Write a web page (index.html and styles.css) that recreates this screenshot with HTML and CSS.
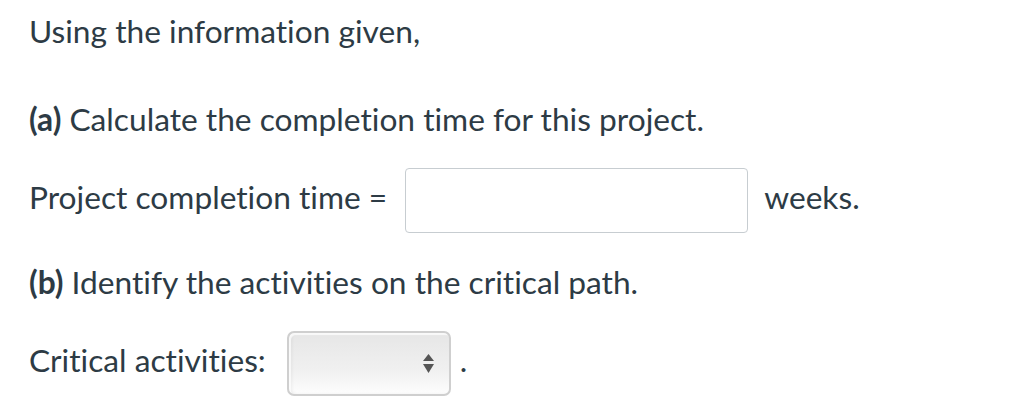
FILE: index.html
```html
<!DOCTYPE html>
<html>
<head>
<meta charset="utf-8">
<link rel="stylesheet" href="styles.css">
</head>
<body>
<div class="question">
  <p class="line intro">Using the information given,</p>
  <p class="line part part-a"><strong>(a)</strong> Calculate the completion time for this project.</p>
  <p class="line answer">Project completion time =<span class="field"></span>weeks.</p>
  <p class="line part part-b"><strong>(b)</strong> Identify the activities on the critical path.</p>
  <p class="line answer">Critical activities:<span class="select"><svg class="arrows" width="11" height="19" viewBox="0 0 11 19"><path d="M5.5 0 L11 7 L0 7 Z" fill="#555"/><path d="M0 10 L11 10 L5.5 19 Z" fill="#555"/></svg></span>.</p>
</div>
</body>
</html>
```

FILE: styles.css
```css
html, body {
  margin: 0;
  padding: 0;
  background: #ffffff;
}

.question {
  padding: 9px 29px 0;
  font-family: Lato, "Open Sans", sans-serif;
  font-size: 31.7px;
  line-height: 45px;
  color: #2d3b45;
  font-variant-ligatures: none;
  font-feature-settings: "liga" 0, "clig" 0;
}

.line {
  margin: 0;
  white-space: nowrap;
}

.line strong {
  font-weight: 700;
}

.intro {
  margin-bottom: 43px;
}

.part-a {
  margin-bottom: 26px;
}

.part-b {
  margin-bottom: 26px;
}

.answer {
  margin-bottom: 27px;
}

.field {
  display: inline-block;
  vertical-align: middle;
  box-sizing: border-box;
  width: 343px;
  height: 65px;
  margin: 0 16px 0 18px;
  border: 1px solid #c7cdd1;
  border-radius: 4px;
  background: #fff;
}

.select {
  display: inline-flex;
  align-items: center;
  justify-content: flex-end;
  vertical-align: middle;
  box-sizing: border-box;
  width: 164px;
  height: 65px;
  margin: 0 9px 0 21px;
  padding-right: 15px;
  border: 2px solid #cfcfcf;
  border-radius: 7px;
  background: linear-gradient(#e6e6e6, #f0f0f0 60%, #fdfdfd);
  box-shadow: inset 2px 2px 1px rgba(255,255,255,0.8), inset 3px 0 3px rgba(0,0,0,0.06);
}

.arrows {
  display: block;
}
```
